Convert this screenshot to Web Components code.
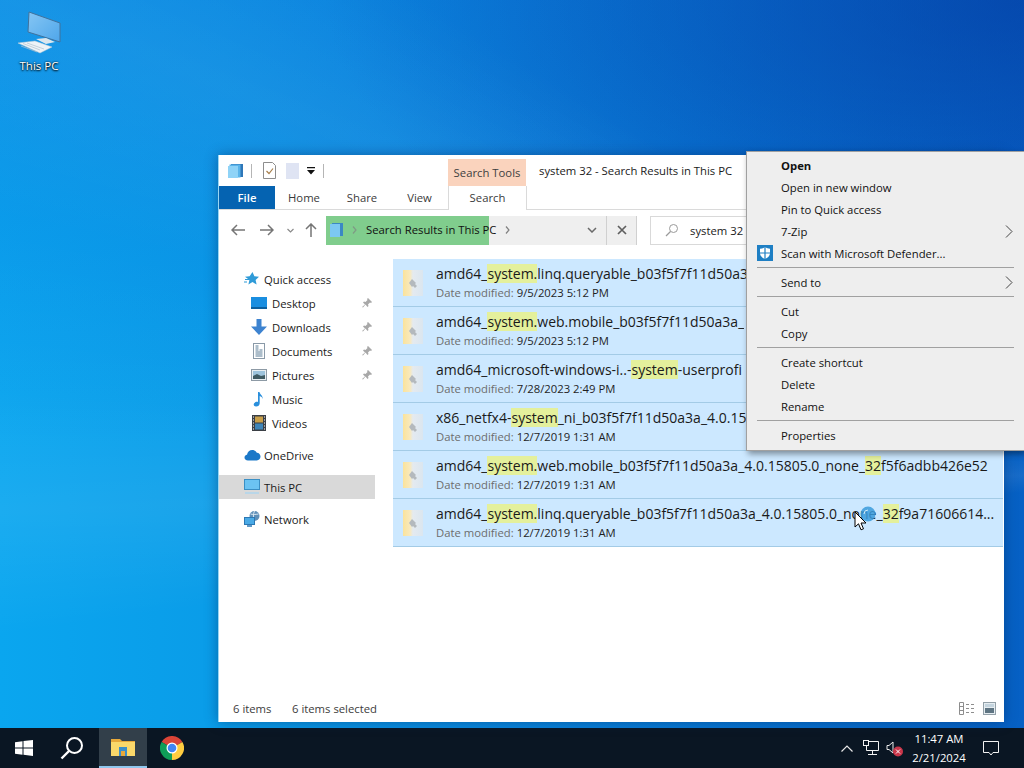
<!DOCTYPE html>
<html>
<head>
<meta charset="utf-8">
<title>system 32 - Search Results in This PC</title>
<style>
    html, body { margin: 0; padding: 0; width: 1024px; height: 768px; overflow: hidden; font-family: "Open Sans", "Liberation Sans", sans-serif; }
</style>
</head>
<body>
<desktop-screen>
    <desktop-icon>This PC</desktop-icon>

    <explorer-window>
        <nav-item slot="nav" level="0" group="12">
            <svg slot="icon" width="16" height="16" viewBox="0 0 16 16"><path d="M8.500 1l1.900 4.300 4.600.5-3.400 3.100 1 4.600-4.100-2.400-4.100 2.400 1-4.600L1 5.800l4.600-.5z" fill="#2f9bd8"/><path d="M1 8.500h4M0 11h3" stroke="#2f9bd8" stroke-width="1.200"/></svg>
            Quick access
        </nav-item>
        <nav-item slot="nav" level="1" pinned>
            <svg slot="icon" width="16" height="14" viewBox="0 0 16 14"><rect x="0" y="1" width="16" height="12" fill="#1a8ee0"/><rect x="0" y="11" width="16" height="2" fill="#0c5f9e"/></svg>
            Desktop
        </nav-item>
        <nav-item slot="nav" level="1" pinned>
            <svg slot="icon" width="16" height="16" viewBox="0 0 16 16"><path d="M5.500 0h5v7.500H16L8 16 0 7.500h5.500z" fill="#3d83d0"/></svg>
            Downloads
        </nav-item>
        <nav-item slot="nav" level="1" pinned>
            <svg slot="icon" width="16" height="16" viewBox="0 0 16 16"><rect x="2.500" y="0.500" width="11" height="15" fill="#fff" stroke="#8a9aa8"/><path d="M4.500 3h3M4.500 5h3M8.500 7h3M4.500 7h3M4.500 9h7M4.500 11h7M4.500 13h7" stroke="#5a7c96"/></svg>
            Documents
        </nav-item>
        <nav-item slot="nav" level="1" pinned>
            <svg slot="icon" width="16" height="14" viewBox="0 0 16 14"><rect x="0.500" y="1.500" width="15" height="11" fill="#e8eef2" stroke="#8d9aa5"/><rect x="2" y="3" width="12" height="8" fill="#9dc3dc"/><path d="M2 8l4-2 4 2 4-1v4H2z" fill="#3f5a62"/></svg>
            Pictures
        </nav-item>
        <nav-item slot="nav" level="1">
            <svg slot="icon" width="16" height="16" viewBox="0 0 16 16"><path d="M7 1h1.500c.3 2.400 3.500 3.300 3.200 7-.3-1.500-1.500-2.600-3-3v7.200c0 2-1.700 3.300-3.600 3.300-1.400 0-2.400-.8-2.400-2 0-1.500 1.600-2.700 3.300-2.700.4 0 .7 0 1 .1z" fill="#2a8fdc"/></svg>
            Music
        </nav-item>
        <nav-item slot="nav" level="1">
            <svg slot="icon" width="14" height="16" viewBox="0 0 14 16"><rect width="14" height="16" fill="#3b3f45"/><rect x="3" y="1.500" width="8" height="6" fill="#c9a04a"/><rect x="3" y="8.500" width="8" height="6" fill="#3f85b8"/><path d="M1 2h1M1 5h1M1 8h1M1 11h1M1 14h1M12 2h1M12 5h1M12 8h1M12 11h1M12 14h1" stroke="#fff"/></svg>
            Videos
        </nav-item>
        <nav-item slot="nav" level="0" group="8">
            <svg slot="icon" width="17" height="12" viewBox="0 0 17 12"><path d="M4 11.500C1.800 11.500.5 10.200.5 8.600c0-1.500 1-2.600 2.500-2.800C3.500 3 5.600 1 8.300 1c2 0 3.700 1.100 4.500 2.800 2.300.1 3.700 1.800 3.700 3.800 0 2.300-1.600 3.900-3.700 3.900z" fill="#1b78c8"/></svg>
            OneDrive
        </nav-item>
        <nav-item slot="nav" level="0" group="8" active>
            <svg slot="icon" width="16" height="16" viewBox="0 0 16 16"><rect x="0.500" y="0.500" width="15" height="10" fill="#6cc3f2" stroke="#3b8fc4"/><path d="M1 13h14v2H1z" fill="#b9d6e8"/></svg>
            This PC
        </nav-item>
        <nav-item slot="nav" level="0" group="8">
            <svg slot="icon" width="16" height="16" viewBox="0 0 16 16"><circle cx="10.500" cy="5" r="5" fill="#5f8fb8"/><path d="M6.500 3c2 .6 5 .6 8 0M10.500 0c-1.500 3-1.500 7 0 10" stroke="#dbe8f2" fill="none"/><rect x="0.500" y="6.500" width="10" height="7" fill="#4aaae6" stroke="#2b78b4"/><path d="M3 15h5" stroke="#2b78b4" stroke-width="1.500"/></svg>
            Network
        </nav-item>

        <file-row slot="rows" date="9/5/2023 5:12 PM">amd64_<hit-text>system.</hit-text>linq.queryable_b03f5f7f11d50a3</file-row>
        <file-row slot="rows" date="9/5/2023 5:12 PM">amd64_<hit-text>system.</hit-text>web.mobile_b03f5f7f11d50a3a_</file-row>
        <file-row slot="rows" date="7/28/2023 2:49 PM">amd64_microsoft-windows-i..-<hit-text>system</hit-text>-userprofi</file-row>
        <file-row slot="rows" date="12/7/2019 1:31 AM">x86_netfx4-<hit-text>system</hit-text>_ni_b03f5f7f11d50a3a_4.0.15</file-row>
        <file-row slot="rows" date="12/7/2019 1:31 AM">amd64_<hit-text>system.</hit-text>web.mobile_b03f5f7f11d50a3a_4.0.15805.0_none_<hit-text>32</hit-text>f5f6adbb426e52</file-row>
        <file-row slot="rows" date="12/7/2019 1:31 AM">amd64_<hit-text>system.</hit-text>linq.queryable_b03f5f7f11d50a3a_4.0.15805.0_none_<hit-text>32</hit-text>f9a71606614...</file-row>
    </explorer-window>

    <context-menu>
        <menu-item bold>Open</menu-item>
        <menu-item>Open in new window</menu-item>
        <menu-item>Pin to Quick access</menu-item>
        <menu-item arrow>7-Zip</menu-item>
        <menu-item>
            <svg slot="icon" width="16" height="16" viewBox="0 0 16 16"><rect width="16" height="16" fill="#1e7fc4"/><path d="M8 2c1.700 1.200 3.300 1.700 5 1.700v4.300c0 2.800-2 4.800-5 6-3-1.200-5-3.200-5-6V3.700C4.700 3.700 6.300 3.200 8 2z" fill="#fff"/><path d="M8 2v12M3 8h10" stroke="#1e7fc4" stroke-width="1.200"/></svg>
            Scan with Microsoft Defender...
        </menu-item>
        <menu-sep></menu-sep>
        <menu-item arrow>Send to</menu-item>
        <menu-sep></menu-sep>
        <menu-item>Cut</menu-item>
        <menu-item>Copy</menu-item>
        <menu-sep></menu-sep>
        <menu-item>Create shortcut</menu-item>
        <menu-item>Delete</menu-item>
        <menu-item>Rename</menu-item>
        <menu-sep></menu-sep>
        <menu-item>Properties</menu-item>
    </context-menu>

    <busy-cursor></busy-cursor>

    <task-bar slot="taskbar"></task-bar>
</desktop-screen>

<script>
class DesktopScreen extends HTMLElement {
    constructor() {
        super();
        const shadow = this.attachShadow({ mode: 'open' });
        shadow.innerHTML = `
            <style>
            :host {
                display: flex;
                flex-direction: column;
                width: 1024px;
                height: 768px;
                overflow: hidden;
            }
            .wall {
                flex: 1;
                position: relative;
                background:
                    conic-gradient(from 262deg at 1180px 470px, transparent 0deg, rgba(255,255,255,.07) 6deg, rgba(255,255,255,.02) 12deg, transparent 20deg, rgba(255,255,255,.05) 30deg, transparent 40deg, transparent 360deg),
                    radial-gradient(700px 320px at 1024px 0, rgba(3,50,150,.55), transparent),
                    linear-gradient(180deg, rgba(12,110,215,.4), transparent 60%),
                    linear-gradient(90deg, #0aa6ef 0%, #0a9ce8 22%, #0a86dd 50%, #0770cf 78%, #0660c4 100%);
            }
            .bar { height: 40px; flex: none; }
            </style>
            <div class="wall"><slot></slot></div>
            <div class="bar"><slot name="taskbar"></slot></div>
        `;
    }
}

class DesktopIcon extends HTMLElement {
    constructor() {
        super();
        const shadow = this.attachShadow({ mode: 'open' });
        shadow.innerHTML = `
            <style>
            :host {
                position: absolute;
                left: 8px;
                top: 10px;
                width: 62px;
                display: flex;
                flex-direction: column;
                align-items: center;
                color: #fff;
                font: 11.5px "Open Sans", sans-serif;
                text-shadow: 0 1px 2px #000, 0 0 2px #000;
            }
            span { margin-top: 4px; line-height: 16px; }
            </style>
            <svg width="46" height="44" viewBox="0 0 46 44">
                <defs><linearGradient id="scr" x1="0" y1="0" x2="1" y2="1"><stop offset="0" stop-color="#86c6f4"/><stop offset="1" stop-color="#4ea6ea"/></linearGradient></defs>
                <path d="M13 2l31 11v19L12 22z" fill="url(#scr)" stroke="#41729c"/>
                <path d="M20 29l10-1 9 4-9 2z" fill="#dde7ee"/>
                <path d="M2 33l17-2 17 6-12 6z" fill="#eef3f7" stroke="#bccbd6" stroke-width=".5"/>
                <path d="M7 33.500l17 6.500M11 33l17 6M5 36l16 6" stroke="#b0c2cf" stroke-width=".7"/>
            </svg>
            <span><slot></slot></span>
        `;
    }
}

class ExplorerWindow extends HTMLElement {
    constructor() {
        super();
        const shadow = this.attachShadow({ mode: 'open' });
        shadow.innerHTML = `
            <style>
            :host {
                position: absolute;
                left: 218px;
                top: 155px;
                width: 786px;
                height: 567px;
                box-sizing: border-box;
                border-left: 1px solid #9ad6f2;
                background: #fff;
                box-shadow: 0 0 12px rgba(0,40,90,.45);
                display: flex;
                flex-direction: column;
                color: #1a1a1a;
                font: 11.3px "Open Sans", sans-serif;
            }
            .title { height: 31px; display: flex; flex: none; }
            .qat { width: 229px; display: flex; align-items: center; padding: 0 0 0 9px; box-sizing: border-box; }
            .qat i { width: 1px; height: 14px; background: #b5b5b5; }
            .ctx {
                margin-top: 4px;
                box-sizing: border-box;
                width: 78px;
                background: #fad3bd;
                color: #404040;
                display: flex;
                align-items: center;
                justify-content: center;
            }
            .caption { margin-left: 13px; display: flex; align-items: center; }
            .tabs { height: 24px; box-sizing: border-box; flex: none; display: flex; border-bottom: 1px solid #dadada; }
            .tab { width: 58px; text-align: center; line-height: 23px; color: #3a3a3a; }
            .file { width: 56px; background: #0563b1; color: #fff; font-weight: 600; }
            .search { width: 79px; border: solid #dadada; border-width: 0 1px; box-sizing: border-box; height: 24px; background: #fff; }
            .address { height: 40px; flex: none; display: flex; align-items: center; }
            .navs { width: 107px; height: 30px; flex: none; display: flex; align-items: center; }
            .navs svg { flex: none; }
            .crumb {
                width: 280px;
                height: 29px;
                flex: none;
                display: flex;
                background: linear-gradient(90deg, #80cd8d 163px, #efefef 163px);
            }
            .crumb .path { width: 251px; display: flex; align-items: center; color: #101010; white-space: nowrap; }
            .crumb .path span { margin-bottom: 2px; }
            .crumb .btn { width: 29px; display: flex; align-items: center; justify-content: center; }
            .stop { width: 31px; height: 29px; flex: none; border-left: 1px solid #d0d0d0; background: #efefef; display: flex; align-items: center; justify-content: center; box-sizing: border-box; border-right: 1px solid #d0d0d0; }
            .box {
                margin-left: 13px;
                flex: 1;
                height: 29px;
                box-sizing: border-box;
                border: 1px solid #d9d9d9;
                display: flex;
                align-items: center;
                padding-left: 14px;
                gap: 11px;
                white-space: nowrap;
            }
            .body { flex: 1; display: flex; min-height: 0; }
            .tree { width: 156px; flex: none; padding-top: 5px; box-sizing: border-box; }
            .list { flex: 1; padding: 9px 1px 0 18px; box-sizing: border-box; min-width: 0; }
            .status { height: 25px; flex: none; display: flex; align-items: center; padding: 0 0 3px 14px; box-sizing: border-box; color: #3c3c3c; }
            .status span { width: 59px; }
            .status svg { margin-right: 8px; }
            .status .fill { flex: 1; width: auto; }
            </style>
            <div class="title">
                <div class="qat">
                    <svg width="16" height="16" viewBox="0 0 16 16" style="margin-right:7px"><rect x="3" y="1" width="12" height="13" fill="#2f77b8"/><rect x="1.500" y="1.500" width="11" height="13" fill="#5ab4ea"/><rect x="0" y="3" width="10" height="12" fill="#8fd3f7"/></svg>
                    <i></i>
                    <svg width="13" height="17" viewBox="0 0 13 17" style="margin:0 10px 0 11px"><path d="M.5.500h9l3 3v13H.5z" fill="#fff" stroke="#8d8d8d"/><path d="M3.500 9l2.500 2.500 4-5" stroke="#a77f4c" fill="none" stroke-width="1.200"/></svg>
                    <svg width="13" height="16" viewBox="0 0 13 16" style="margin-right:8px"><rect width="13" height="16" fill="#dfe4f3"/></svg>
                    <svg width="8" height="8" viewBox="0 0 8 8" style="margin-right:8px"><path d="M0 0h8v1.200H0zM0 3h8L4 7.500z" fill="#111"/></svg>
                    <i></i>
                </div>
                <div class="ctx">Search Tools</div>
                <div class="caption">system 32 - Search Results in This PC</div>
            </div>
            <div class="tabs">
                <div class="tab file">File</div>
                <div class="tab">Home</div>
                <div class="tab">Share</div>
                <div class="tab" style="width:57px">View</div>
                <div class="tab search">Search</div>
            </div>
            <div class="address">
                <div class="navs">
                    <svg width="14" height="12" viewBox="0 0 14 12" style="margin-left:12px"><path d="M6 1L1 6l5 5M1 6h13" fill="none" stroke="#757575" stroke-width="1.500"/></svg>
                    <svg width="14" height="12" viewBox="0 0 14 12" style="margin-left:15px"><path d="M8 1l5 5-5 5M13 6H0" fill="none" stroke="#757575" stroke-width="1.500"/></svg>
                    <svg width="7" height="5" viewBox="0 0 7 5" style="margin-left:13px"><path d="M.5 1L3.500 4l3-3" fill="none" stroke="#8a8a8a" stroke-width="1.200"/></svg>
                    <svg width="12" height="14" viewBox="0 0 12 14" style="margin-left:11px"><path d="M1 6l5-5 5 5M6 1v13" fill="none" stroke="#757575" stroke-width="1.500"/></svg>
                </div>
                <div class="crumb">
                    <div class="path">
                        <svg width="16" height="16" viewBox="0 0 16 16" style="margin-left:2px"><rect x="4" y="1" width="11" height="13" fill="#3b88c4"/><rect x="2" y="2" width="10" height="13" fill="#7cc8f2"/></svg>
                        <svg width="5" height="8" viewBox="0 0 5 8" style="margin:0 9px 0 8px"><path d="M1 .500L4 4 1 7.500" fill="none" stroke="#7f9a85" stroke-width="1.200"/></svg>
                        <span>Search Results in This PC</span>
                        <svg width="5" height="8" viewBox="0 0 5 8" style="margin-left:9px"><path d="M1 .500L4 4 1 7.500" fill="none" stroke="#808080" stroke-width="1.200"/></svg>
                    </div>
                    <div class="btn"><svg width="10" height="6" viewBox="0 0 10 6"><path d="M1 1l4 4 4-4" fill="none" stroke="#6a6a6a" stroke-width="1.500"/></svg></div>
                </div>
                <div class="stop"><svg width="10" height="10" viewBox="0 0 10 10"><path d="M1 1l8 8M9 1l-8 8" stroke="#5f5f5f" stroke-width="1.700"/></svg></div>
                <div class="box">
                    <svg width="14" height="14" viewBox="0 0 14 14"><circle cx="8.500" cy="5.500" r="4" fill="none" stroke="#9a9a9a"/><path d="M5.500 8.500L1 13" stroke="#9a9a9a" stroke-width="1.200"/></svg>
                    <span>system 32</span>
                </div>
            </div>
            <div class="body">
                <div class="tree"><slot name="nav"></slot></div>
                <div class="list"><slot name="rows"></slot></div>
            </div>
            <div class="status">
                <span>6 items</span>
                <span class="fill">6 items selected</span>
                <svg width="16" height="13" viewBox="0 0 16 13"><path d="M.5.500h4v12h-4zM.5 4.500h4M.5 8.500h4M7 2.500h3M12 2.500h3M7 6.500h3M12 6.500h3M7 10.500h3M12 10.500h3" fill="none" stroke="#8d8d8d"/></svg>
                <svg width="13" height="13" viewBox="0 0 13 13"><rect x=".5" y=".5" width="12" height="12" fill="#e6edf1" stroke="#93a0a8"/><rect x="2" y="2" width="9" height="3" fill="#c4d4de"/><rect x="2" y="6" width="9" height="5" fill="#5e7482"/></svg>
            </div>
        `;
    }
}

class NavItem extends HTMLElement {
    constructor() {
        super();
        const shadow = this.attachShadow({ mode: 'open' });
        const child = this.getAttribute('level') === '1';
        const pin = this.hasAttribute('pinned') ? `
            <svg class="pin" width="10" height="10" viewBox="0 0 10 10"><path d="M6 0l4 4-1 1-1-.5L6 6.500 6.500 8 5.500 9 3.500 6.500 1 9.500 0 9l3-2.500L1 4.500l1-1 1.500.500L5.500 2 5 1z" fill="#a8a8a8"/></svg>
        ` : '';
        shadow.innerHTML = `
            <style>
            :host {
                display: flex;
                align-items: center;
                height: 24px;
                margin-top: ${this.getAttribute('group') || 0}px;
                position: relative;
                color: #1a1a1a;
                font: 11.3px "Open Sans", sans-serif;
                background: ${this.hasAttribute('active') ? '#d9d9d9' : 'transparent'};
            }
            .ic { width: 18px; margin-left: ${child ? 31 : 24}px; margin-right: ${child ? 4 : 3}px; display: flex; justify-content: center; flex: none; }
            .pin { position: absolute; left: 143px; top: 7px; }
            </style>
            <div class="ic"><slot name="icon"></slot></div>
            <slot></slot>
            ${pin}
        `;
    }
}

class HitText extends HTMLElement {
    constructor() {
        super();
        const shadow = this.attachShadow({ mode: 'open' });
        shadow.innerHTML = `
            <style>
            :host { display: inline-block; background: #e4f09c; height: 19px; line-height: 19px; }
            </style>
            <slot></slot>
        `;
    }
}

class FileRow extends HTMLElement {
    constructor() {
        super();
        const shadow = this.attachShadow({ mode: 'open' });
        shadow.innerHTML = `
            <style>
            :host {
                display: flex;
                height: 48px;
                box-sizing: border-box;
                background: #cce8ff;
                border-bottom: 1px solid #a3cbe6;
                color: #1a1a1a;
                font: 11.3px "Open Sans", sans-serif;
                white-space: nowrap;
            }
            .ic { width: 43px; flex: none; display: flex; align-items: center; padding-left: 10px; box-sizing: border-box; }
            .txt { min-width: 0; overflow: hidden; padding-top: 4px; }
            .name { font-size: 14px; height: 21px; line-height: 21px; }
            .meta { height: 18px; line-height: 18px; color: #1f1f1f; }
            .meta b { font-weight: 400; color: #6d6d6d; margin-right: 3px; }
            </style>
            <div class="ic">
                <svg width="20" height="26" viewBox="0 0 20 26">
                    <defs><linearGradient id="zip" x1="0" y1="0" x2="1" y2="0"><stop offset="0" stop-color="#fbe39b"/><stop offset=".35" stop-color="#f8e9bd"/><stop offset=".5" stop-color="#e4eaf0"/><stop offset="1" stop-color="#dbe6ef"/></linearGradient></defs>
                    <rect x="0" y="0" width="20" height="26" fill="url(#zip)"/>
                    <path d="M9 9l4 4-1 1 2 2-2 2-2-2-1 1-3-4z" fill="#b4b9bd"/>
                </svg>
            </div>
            <div class="txt">
                <div class="name"><slot></slot></div>
                <div class="meta"><b>Date modified:</b>${this.getAttribute('date')}</div>
            </div>
        `;
    }
}

class ContextMenu extends HTMLElement {
    constructor() {
        super();
        const shadow = this.attachShadow({ mode: 'open' });
        shadow.innerHTML = `
            <style>
            :host {
                position: absolute;
                left: 746px;
                top: 151px;
                width: 278px;
                box-sizing: border-box;
                padding: 2px 0 4px;
                background: #eeeeee;
                border: 1px solid #a0a0a0;
                border-right: 0;
                box-shadow: 2px 3px 6px rgba(0,0,0,.4);
                color: #111;
                font: 11.3px "Open Sans", sans-serif;
            }
            </style>
            <slot></slot>
        `;
    }
}

class MenuItem extends HTMLElement {
    constructor() {
        super();
        const shadow = this.attachShadow({ mode: 'open' });
        const arrow = this.hasAttribute('arrow') ? `
            <svg class="arrow" width="8" height="13" viewBox="0 0 8 13"><path d="M1 .500l6 6-6 6" fill="none" stroke="#444" stroke-width="1"/></svg>
        ` : '';
        shadow.innerHTML = `
            <style>
            :host {
                display: flex;
                align-items: center;
                height: 22px;
                font-weight: ${this.hasAttribute('bold') ? 700 : 400};
            }
            .ic { width: 34px; flex: none; display: flex; justify-content: flex-end; padding-right: 8px; box-sizing: border-box; }
            .t { flex: 1; }
            .arrow { margin-right: 11px; }
            </style>
            <div class="ic"><slot name="icon"></slot></div>
            <div class="t"><slot></slot></div>
            ${arrow}
        `;
    }
}

class MenuSep extends HTMLElement {
    constructor() {
        super();
        const shadow = this.attachShadow({ mode: 'open' });
        shadow.innerHTML = `
            <style>
            :host { display: block; height: 7px; padding: 3px 10px; box-sizing: border-box; }
            div { height: 1px; background: #a0a0a0; }
            </style>
            <div></div>
        `;
    }
}

class BusyCursor extends HTMLElement {
    constructor() {
        super();
        const shadow = this.attachShadow({ mode: 'open' });
        shadow.innerHTML = `
            <style>
            :host { position: absolute; left: 853px; top: 505px; width: 26px; height: 28px; }
            </style>
            <svg width="26" height="28" viewBox="0 0 26 28">
                <circle cx="15" cy="9" r="7.500" fill="#3a9bdc" fill-opacity=".85"/>
                <path d="M11 9a4 4 0 0 1 4-4" stroke="#cfe9f8" fill="none"/>
                <path d="M2 7v15l3.500-3.200 2.500 6 2.500-1-2.500-5.800h5z" fill="#fff" stroke="#000"/>
            </svg>
        `;
    }
}

class TaskBar extends HTMLElement {
    constructor() {
        super();
        const shadow = this.attachShadow({ mode: 'open' });
        shadow.innerHTML = `
            <style>
            :host {
                display: flex;
                align-items: stretch;
                height: 40px;
                background: #0a1623;
                color: #fff;
                font: 11.3px "Open Sans", sans-serif;
            }
            .btn { display: flex; align-items: center; justify-content: center; flex: none; box-sizing: border-box; }
            .start { width: 48px; }
            .find { width: 48px; margin-right: 3px; }
            .app { width: 48px; background: #323f4a; border-bottom: 2px solid #8fc7ee; margin-right: 1px; }
            .chrome { width: 48px; }
            .fill { flex: 1; }
            .tray { display: flex; align-items: center; }
            .clock { width: 62px; text-align: center; line-height: 19px; margin-left: 4px; }
            .note { width: 42px; margin-right: 12px; display: flex; justify-content: center; align-items: center; }
            </style>
            <div class="btn start">
                <svg width="18" height="16" viewBox="0 0 18 16"><path d="M0 2.300L7.500 1.200V7.500H0zM8.500 1L18 0v7.500H8.500zM0 8.500h7.500v6.300L0 13.700zM8.500 8.500H18V16l-9.500-1.200z" fill="#fff"/></svg>
            </div>
            <div class="btn find">
                <svg width="24" height="24" viewBox="0 0 24 24"><circle cx="14.500" cy="9.500" r="7.500" fill="none" stroke="#fff" stroke-width="2"/><path d="M9 15L1.500 22.500" stroke="#fff" stroke-width="2.400"/></svg>
            </div>
            <div class="btn app">
                <svg width="24" height="20" viewBox="0 0 24 20"><path d="M0 2h9l2 2h13v14H0z" fill="#e8a93a"/><rect x="0" y="5" width="24" height="14" fill="#fbd86a"/><rect x="8" y="10" width="8" height="9" fill="#3c8ec8"/><rect x="10" y="14" width="4" height="5" fill="#e8a93a"/></svg>
            </div>
            <div class="btn chrome">
                <svg width="24" height="24" viewBox="0 0 24 24">
                    <path d="M12 12L1.600 6A12 12 0 0 1 22.400 6z" fill="#db4437"/>
                    <path d="M12 12L1.600 6A12 12 0 0 0 12 24z" fill="#0f9d58"/>
                    <path d="M12 12L12 24A12 12 0 0 0 22.400 6z" fill="#ffcd40"/>
                    <circle cx="12" cy="12" r="5.500" fill="#fff"/>
                    <circle cx="12" cy="12" r="4.300" fill="#4285f4"/>
                </svg>
            </div>
            <div class="fill"></div>
            <div class="tray">
                <svg width="12" height="7" viewBox="0 0 12 7" style="margin-right:10px"><path d="M.5 6.500L6 1l5.500 5.500" fill="none" stroke="#e8e8e8" stroke-width="1.200"/></svg>
                <svg width="16" height="16" viewBox="0 0 16 16" style="margin-right:5px"><path d="M3.500 1.500h12v9h-12zM9.500 10.500v3.500M5 14.500h9" fill="none" stroke="#f2f2f2"/><rect x="0.500" y="0.500" width="5" height="5" fill="#0a1623" stroke="#f2f2f2"/></svg>
                <svg width="20" height="18" viewBox="0 0 20 18"><path d="M3 6.500h2l4-3.500v11l-4-3.500H3z" fill="none" stroke="#eaeaea"/><circle cx="14" cy="12.500" r="5" fill="#c9364a"/><path d="M12 10.500l4 4M16 10.500l-4 4" stroke="#fff"/></svg>
                <div class="clock">11:47 AM<br>2/21/2024</div>
                <div class="note">
                    <svg width="16" height="16" viewBox="0 0 16 16"><path d="M.5 1.500h15v11H10L8 15l-2-2.500H.5z" fill="none" stroke="#f2f2f2"/></svg>
                </div>
            </div>
        `;
    }
}

window.customElements.define('desktop-screen', DesktopScreen);
window.customElements.define('desktop-icon', DesktopIcon);
window.customElements.define('explorer-window', ExplorerWindow);
window.customElements.define('nav-item', NavItem);
window.customElements.define('hit-text', HitText);
window.customElements.define('file-row', FileRow);
window.customElements.define('context-menu', ContextMenu);
window.customElements.define('menu-item', MenuItem);
window.customElements.define('menu-sep', MenuSep);
window.customElements.define('busy-cursor', BusyCursor);
window.customElements.define('task-bar', TaskBar);
</script>
</body>
</html>
